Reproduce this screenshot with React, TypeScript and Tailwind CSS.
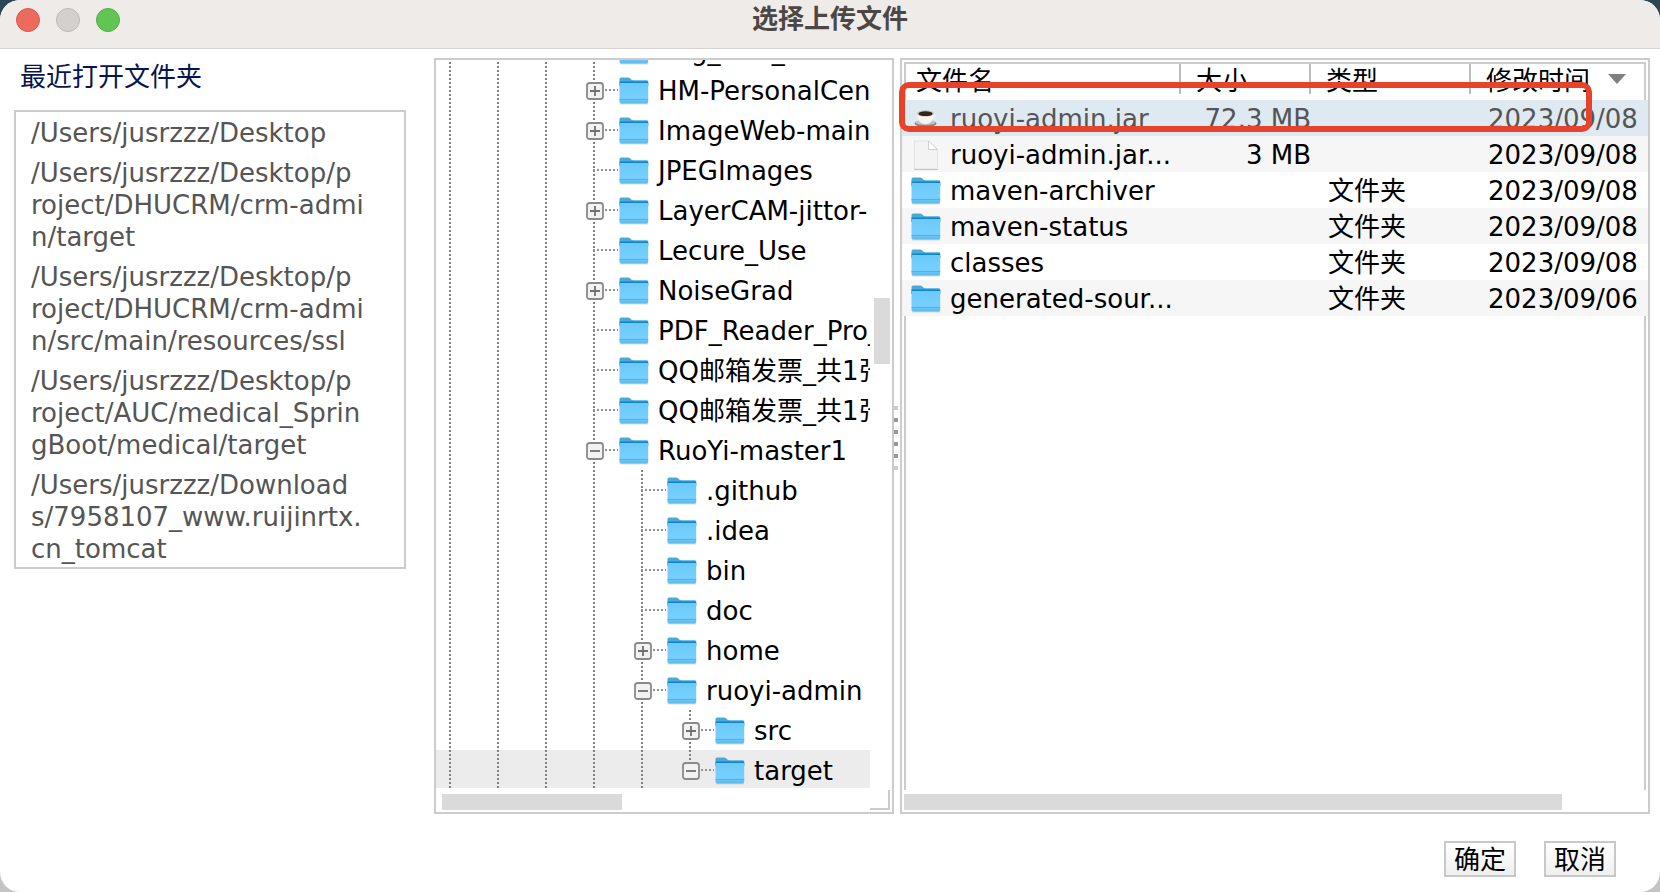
import React from 'react';

interface TreeNode {
  name: string;
  level: number;
  state: 'open' | 'closed' | 'leaf';
}

interface FileRow {
  name: string;
  size: string;
  type: string;
  date: string;
  kind: 'jar' | 'doc' | 'folder';
}

const recentFolders = [
  ['/Users/jusrzzz/Desktop'],
  ['/Users/jusrzzz/Desktop/p', 'roject/DHUCRM/crm-admi', 'n/target'],
  ['/Users/jusrzzz/Desktop/p', 'roject/DHUCRM/crm-admi', 'n/src/main/resources/ssl'],
  ['/Users/jusrzzz/Desktop/p', 'roject/AUC/medical_Sprin', 'gBoot/medical/target'],
  ['/Users/jusrzzz/Download', 's/7958107_www.ruijinrtx.', 'cn_tomcat'],
];

const tree: TreeNode[] = [
  { name: 'Img_Test_Final', level: 0, state: 'leaf' },
  { name: 'HM-PersonalCen', level: 0, state: 'closed' },
  { name: 'ImageWeb-main', level: 0, state: 'closed' },
  { name: 'JPEGImages', level: 0, state: 'leaf' },
  { name: 'LayerCAM-jittor-', level: 0, state: 'closed' },
  { name: 'Lecure_Use', level: 0, state: 'leaf' },
  { name: 'NoiseGrad', level: 0, state: 'closed' },
  { name: 'PDF_Reader_Pro_', level: 0, state: 'leaf' },
  { name: 'QQ邮箱发票_共1张', level: 0, state: 'leaf' },
  { name: 'QQ邮箱发票_共1张', level: 0, state: 'leaf' },
  { name: 'RuoYi-master1', level: 0, state: 'open' },
  { name: '.github', level: 1, state: 'leaf' },
  { name: '.idea', level: 1, state: 'leaf' },
  { name: 'bin', level: 1, state: 'leaf' },
  { name: 'doc', level: 1, state: 'leaf' },
  { name: 'home', level: 1, state: 'closed' },
  { name: 'ruoyi-admin', level: 1, state: 'open' },
  { name: 'src', level: 2, state: 'closed' },
  { name: 'target', level: 2, state: 'open' },
];

const files: FileRow[] = [
  { name: 'ruoyi-admin.jar', size: '72.3 MB', type: '', date: '2023/09/08', kind: 'jar' },
  { name: 'ruoyi-admin.jar...', size: '3 MB', type: '', date: '2023/09/08', kind: 'doc' },
  { name: 'maven-archiver', size: '', type: '文件夹', date: '2023/09/08', kind: 'folder' },
  { name: 'maven-status', size: '', type: '文件夹', date: '2023/09/08', kind: 'folder' },
  { name: 'classes', size: '', type: '文件夹', date: '2023/09/08', kind: 'folder' },
  { name: 'generated-sour...', size: '', type: '文件夹', date: '2023/09/06', kind: 'folder' },
];

const FolderIcon: React.FC = () => (
  <svg width="30" height="28" viewBox="0 0 30 28" className="shrink-0" aria-hidden="true">
    <defs>
      <linearGradient id="folder" x1="0" y1="0" x2="0" y2="1">
        <stop offset="0" stopColor="#6ccaf8" />
        <stop offset="0.7" stopColor="#76d0ff" />
        <stop offset="1" stopColor="#5cb8e8" />
      </linearGradient>
    </defs>
    <path d="M1 26h28v1.5H1z" fill="#b5c4cc" opacity="0.6" />
    <path d="M.5 2Q.5.5 2 .5h7.500c1.500 0 2.500 2.500 4.500 2.700H28q1.200 0 1.200 1.500V9H.5z" fill="#4ba9da" />
    <path d="M.5 4.500h28.700V9H.5z" fill="#0f86c3" />
    <path d="M.5 6h28.700v18.700q0 1.800-1.800 1.800H2.300Q.5 26.500.5 24.700z" fill="url(#folder)" />
    <path d="M.5 22.500h28.700" stroke="#57b2e0" strokeWidth="1" />
  </svg>
);

const DocIcon: React.FC = () => (
  <svg width="30" height="30" viewBox="0 0 30 30" className="shrink-0" aria-hidden="true">
    <path d="M3.500 1h14l9 8.500V29h-23z" fill="#f3f3f3" stroke="#e2e2e2" />
    <path d="M3 29.500h24" stroke="#c4c4c4" />
    <path d="M17.500 1v8.500h9z" fill="#fff" stroke="#cfcfcf" />
  </svg>
);

const JarIcon: React.FC = () => (
  <svg width="30" height="28" viewBox="0 0 30 28" className="shrink-0" aria-hidden="true">
    <ellipse cx="14.500" cy="18.500" rx="11" ry="3.500" fill="#858585" />
    <ellipse cx="14.500" cy="17.500" rx="10" ry="2.500" fill="#c4c4c4" />
    <path d="M21 9.500c4-1 4.500 4-.500 4.500" fill="none" stroke="#f1f1f1" strokeWidth="1.500" />
    <path d="M6 8.500c0 6 3 10.500 8.500 10.500S23 14.500 23 8.500z" fill="#f6f4f2" />
    <ellipse cx="14.500" cy="8.500" rx="8.500" ry="3.200" fill="#c9c2bd" />
    <ellipse cx="14.500" cy="8.700" rx="7" ry="2.400" fill="#33231b" />
  </svg>
);

const Expander: React.FC<{ open: boolean; name: string }> = ({ open, name }) => (
  <button aria-label={name} className="block h-[18px] w-[18px]">
    <svg width="18" height="18" viewBox="0 0 18 18" aria-hidden="true">
      <rect x="1" y="1" width="16" height="16" rx="2.500" fill="#f2f2f2" stroke="#8a8a8a" strokeWidth="1.800" />
      <path d={open ? 'M4 9h10' : 'M4 9h10M9 4v10'} stroke="#6f6f6f" strokeWidth="1.800" />
    </svg>
  </button>
);

const TreeRow: React.FC<{ node: TreeNode; selected: boolean }> = ({ node, selected }) => (
  <li className="h-10 shrink-0">
    <div className={`flex h-[38px] items-start pl-[13px] ${selected ? 'bg-[#ececec]' : ''}`}>
      {/* dotted guides of the parent levels */}
      {Array.from({ length: 3 + node.level }, (_, i) => (
        <span key={i} className="h-10 w-12 shrink-0">
          <span className="block h-10 w-0.5 bg-[repeating-linear-gradient(to_bottom,#808080_0_2px,transparent_2px_4px)]" />
        </span>
      ))}
      <span className="relative h-10 w-[26px] shrink-0">
        <span
          className={`block w-0.5 bg-[repeating-linear-gradient(to_bottom,#808080_0_2px,transparent_2px_4px)] ${selected ? 'h-5' : 'h-10'}`}
        />
        <span className="absolute top-[19px] left-0 h-0.5 w-[25px] bg-[repeating-linear-gradient(to_right,#909090_0_2px,transparent_2px_4px)]" />
        {node.state !== 'leaf' && (
          <span className="absolute top-3 -left-[7px]">
            <Expander open={node.state === 'open'} name={node.name} />
          </span>
        )}
      </span>
      <span className="flex h-[42px] items-center gap-[9px]">
        <FolderIcon />
        <span className="whitespace-nowrap">{node.name}</span>
      </span>
    </div>
  </li>
);

const RecentPanel: React.FC = () => (
  <section className="w-[392px] shrink-0">
    <h2 className="h-[52px] pl-1.5 leading-[38px] text-[#06154d]">最近打开文件夹</h2>
    <ul className="flex flex-col gap-2 border-2 border-[#cccccc] pt-[5px] pr-4 pb-0.5 pl-[15px] leading-8 text-[#555555]">
      {recentFolders.map((lines, i) => (
        <li key={i}>
          {lines.map((line) => (
            <span key={line} className="block whitespace-nowrap">{line}</span>
          ))}
        </li>
      ))}
    </ul>
  </section>
);

const TreePanel: React.FC = () => (
  <section className="flex w-[460px] shrink-0 flex-col border-2 border-[#cccccc]">
    <div className="flex h-[730px]">
      <ul className="flex min-w-0 flex-1 flex-col justify-end overflow-hidden">
        {tree.map((node, i) => (
          <TreeRow key={i} node={node} selected={i === tree.length - 1} />
        ))}
      </ul>
      <div className="w-[22px] shrink-0 px-1 pt-[238px]">
        <div className="h-[66px] w-4 bg-[#dadada]" />
      </div>
    </div>
    <div className="flex h-[22px] justify-between pl-1.5">
      <div className="mt-1 h-4 w-[180px] bg-[#dadada]" />
      <div className="mr-[2px] h-5 w-5 border-r-2 border-b-2 border-[#cccccc]" />
    </div>
  </section>
);

const FilePanel: React.FC = () => (
  <section className="relative flex min-w-0 flex-1 flex-col border-2 border-[#cccccc] pt-0.5">
    <div className="h-[728px] overflow-hidden">
      <div className="mx-0.5 h-full border-2 border-b-0 border-[#cccccc]">
        <table className="-mx-1 w-[calc(100%+8px)] table-fixed border-collapse text-left">
          <thead>
            <tr className="h-9 align-top leading-[34px]">
              <th className="w-[279px] p-0 font-normal">
                <div className="h-[30px] border-r-2 border-[#bbbbbb] pl-[14px]">文件名</div>
              </th>
              <th className="w-[130px] p-0 font-normal">
                <div className="h-[30px] border-r-2 border-[#bbbbbb] pl-[15px]">大小</div>
              </th>
              <th className="w-40 p-0 font-normal">
                <div className="h-[30px] border-r-2 border-[#bbbbbb] pl-[15px]">类型</div>
              </th>
              <th className="p-0 font-normal">
                <div className="flex h-[30px] items-start gap-[18px] pl-[15px] whitespace-nowrap">
                  修改时间
                  <svg width="18" height="10" viewBox="0 0 18 10" className="mt-2.5 shrink-0" aria-hidden="true">
                    <path d="M0 0h18L9 10z" fill="#808080" />
                  </svg>
                </div>
              </th>
            </tr>
          </thead>
          <tbody>
            {files.map((f, i) => (
              <tr
                key={f.name}
                className={`h-9 leading-[34px] ${i === 0 ? 'bg-[#dee9f1] text-[#555555]' : i % 2 ? 'bg-[#f6f6f6]' : 'bg-white'}`}
              >
                <td className="p-0 pt-0.5">
                  <div className="flex h-[34px] items-center gap-[9px] pl-[9px] whitespace-nowrap">
                    {f.kind === 'jar' && <JarIcon />}
                    {f.kind === 'doc' && <DocIcon />}
                    {f.kind === 'folder' && <FolderIcon />}
                    {f.name}
                  </div>
                </td>
                <td className="p-0 pt-0.5 text-right whitespace-nowrap">{f.size}</td>
                <td className="p-0 pt-0.5 pl-[17px]">{f.type}</td>
                <td className="p-0 pt-0.5 pl-[17px] whitespace-nowrap">{f.date}</td>
              </tr>
            ))}
          </tbody>
        </table>
      </div>
    </div>
    <div className="h-[22px] pt-1 pr-[86px] pl-0.5">
      <div className="h-4 bg-[#dadada]" />
    </div>
    {/* red marker around the selected jar */}
    <div className="absolute top-[22px] right-[56px] -left-[3px] h-[50px] rounded-[10px] border-6 border-[#e6432a]" />
  </section>
);

const App: React.FC = () => {
  return (
    <div className="min-h-screen bg-linear-to-b from-[#2c4653] from-50% to-[#c4c4c4] to-50% font-['DejaVu_Sans','Noto_Sans_CJK_SC',sans-serif] text-[26px] text-black">
      <div className="flex min-h-screen flex-col overflow-hidden rounded-[20px] bg-white">
        <header className="relative flex h-[49px] items-start justify-center border-b border-[#d6d3d1] bg-[#efebe8]">
          <div className="absolute top-2 left-4 flex gap-4">
            <button aria-label="关闭" className="h-6 w-6 rounded-full border border-[#d9584e] bg-[#ed6a5e]" />
            <button aria-label="最小化" className="h-6 w-6 rounded-full border border-[#bcb8b5] bg-[#d4d0cd]" />
            <button aria-label="缩放" className="h-6 w-6 rounded-full border border-[#54ae45] bg-[#61c554]" />
          </div>
          <h1 className="leading-[38px] font-bold text-[#4c4744]">选择上传文件</h1>
        </header>

        <main className="flex items-start pt-[9px] pr-[10px] pl-[14px]">
          <RecentPanel />
          <div className="w-7 shrink-0" />
          <TreePanel />
          <div className="flex w-1.5 shrink-0 flex-col gap-2 pt-[348px]">
            {[0, 1, 2, 3, 4, 5].map((i) => (
              <span key={i} className={`h-1 w-1 ${i === 0 || i === 5 ? 'bg-[#cccccc]' : 'bg-[#999999]'}`} />
            ))}
          </div>
          <FilePanel />
        </main>

        <footer className="flex justify-end gap-7 pt-[27px] pr-11">
          <button className="h-9 w-[72px] border-2 border-[#c8c8c8] bg-linear-to-b from-white to-[#efefef] leading-[34px]">确定</button>
          <button className="h-9 w-[72px] border-2 border-[#c8c8c8] bg-linear-to-b from-white to-[#efefef] leading-[34px]">取消</button>
        </footer>
      </div>
    </div>
  );
};

export default App;
